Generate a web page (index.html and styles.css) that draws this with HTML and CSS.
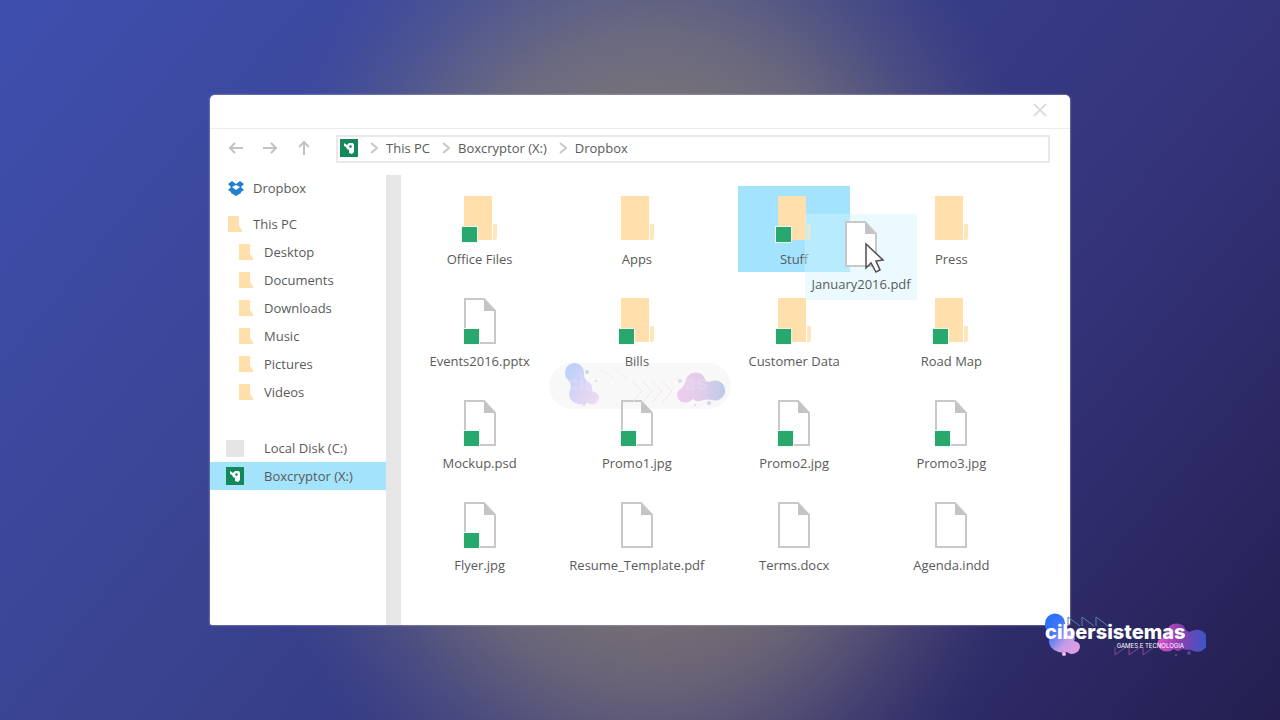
FILE: index.html
```html
<!DOCTYPE html>
<html lang="en">
<head>
<meta charset="utf-8">
<title>Dropbox</title>
<link rel="stylesheet" href="styles.css">
</head>
<body>
<svg class="defs" aria-hidden="true">
  <symbol id="folder" viewBox="0 0 38 47"><path d="M3 0h28v44H3z" fill="#ffdfab"/><path d="M32 29l1-1h3v14l-1 2h-3z" fill="#ffdfab" opacity=".8"/></symbol>
  <symbol id="file" viewBox="0 0 34 47"><path d="M2 1h19l11 12v32H2z" fill="#fff" stroke="#c8c8c8" stroke-width="2"/><path d="M21 1l11 12H21z" fill="#c4c4c4"/></symbol>
  <symbol id="mini" viewBox="0 0 14 16"><path d="M0 0h11v10l3 4v2H0z" fill="#ffdfab"/></symbol>
  <symbol id="box" viewBox="0 0 18 18"><path d="M0 0h18v18H0z" fill="#13895b"/><path d="M4 4l3 2 2-2h4l1 2v7l-2 2-3-1v-3l-2-1-1-2-2-1z" fill="#fff"/><circle cx="10.500" cy="7.500" r="1.300" fill="#13895b"/></symbol>
  <symbol id="next" viewBox="0 0 8 12"><path d="M1 1l6 5-6 5" fill="none" stroke="#c8c8c8" stroke-width="2"/></symbol>
</svg>
<main class="window">
  <header class="titlebar">
    <button class="close" aria-label="Close"><svg width="14" height="14" viewBox="0 0 14 14"><path d="M1 1l12 12M13 1L1 13" stroke="#dcdcdc" stroke-width="2"/></svg></button>
  </header>
  <div class="toolbar">
    <div class="history">
      <button aria-label="Back"><svg width="16" height="16" viewBox="0 0 16 16"><path d="M15 8H2M7 3L2 8l5 5"/></svg></button>
      <button aria-label="Forward"><svg width="16" height="16" viewBox="0 0 16 16"><path d="M1 8h13M9 3l5 5-5 5"/></svg></button>
      <button aria-label="Up"><svg width="16" height="16" viewBox="0 0 16 16"><path d="M8 15V2M3 7l5-5 5 5"/></svg></button>
    </div>
    <nav class="address" aria-label="Path">
      <svg width="18" height="18"><use href="#box"/></svg>
      <svg class="sep" width="8" height="12"><use href="#next"/></svg><a href="#">This PC</a>
      <svg class="sep" width="8" height="12"><use href="#next"/></svg><a href="#">Boxcryptor (X:)</a>
      <svg class="sep" width="8" height="12"><use href="#next"/></svg><a href="#">Dropbox</a>
    </nav>
  </div>
  <div class="body">
    <nav class="sidebar" aria-label="Places">
      <a class="place first" href="#"><svg width="16" height="15" viewBox="0 0 16 15"><path d="M4 0l4 3 4-3 4 3-3 3 3 3-3 2v1l-5 3-5-3v-1L0 9l3-3-3-3z" fill="#2180d0"/><path d="M8 4l4 2-4 3-4-3z" fill="#fff"/></svg><span>Dropbox</span></a>
      <a class="place" href="#"><svg width="14" height="16"><use href="#mini"/></svg><span>This PC</span></a>
      <a class="place child" href="#"><svg width="14" height="16"><use href="#mini"/></svg><span>Desktop</span></a>
      <a class="place child" href="#"><svg width="14" height="16"><use href="#mini"/></svg><span>Documents</span></a>
      <a class="place child" href="#"><svg width="14" height="16"><use href="#mini"/></svg><span>Downloads</span></a>
      <a class="place child" href="#"><svg width="14" height="16"><use href="#mini"/></svg><span>Music</span></a>
      <a class="place child" href="#"><svg width="14" height="16"><use href="#mini"/></svg><span>Pictures</span></a>
      <a class="place child" href="#"><svg width="14" height="16"><use href="#mini"/></svg><span>Videos</span></a>
      <a class="place drive disk" href="#"><svg width="18" height="17" viewBox="0 0 18 17"><path d="M0 0h18v17H0z" fill="#e5e5e5"/></svg><span>Local Disk (C:)</span></a>
      <a class="place drive current" href="#"><svg width="18" height="18"><use href="#box"/></svg><span>Boxcryptor (X:)</span></a>
    </nav>
    <div class="scrollbar"></div>
    <section class="files" aria-label="Files">
      <button class="tile locked"><span class="icon"><svg width="38" height="47"><use href="#folder"/></svg></span><span>Office Files</span></button>
      <button class="tile"><span class="icon"><svg width="38" height="47"><use href="#folder"/></svg></span><span>Apps</span></button>
      <div class="drop">
        <button class="tile locked selected"><span class="icon"><svg width="38" height="47"><use href="#folder"/></svg></span><span>Stuff</span></button>
        <div class="tile dragged"><span class="icon"><svg width="34" height="47"><use href="#file"/></svg></span><span>January2016.pdf</span>
          <svg class="cursor" width="20" height="31" viewBox="0 0 20 31"><path d="M1 2v24l5-5 5 9 4-2-4-9 7-1z" fill="#fff" stroke="#514c52" stroke-width="1.500"/></svg>
        </div>
      </div>
      <button class="tile"><span class="icon"><svg width="38" height="47"><use href="#folder"/></svg></span><span>Press</span></button>
      <button class="tile locked"><span class="icon"><svg width="34" height="47"><use href="#file"/></svg></span><span>Events2016.pptx</span></button>
      <button class="tile locked"><span class="icon"><svg width="38" height="47"><use href="#folder"/></svg></span><span>Bills</span></button>
      <button class="tile locked"><span class="icon"><svg width="38" height="47"><use href="#folder"/></svg></span><span>Customer Data</span></button>
      <button class="tile locked"><span class="icon"><svg width="38" height="47"><use href="#folder"/></svg></span><span>Road Map</span></button>
      <button class="tile locked"><span class="icon"><svg width="34" height="47"><use href="#file"/></svg></span><span>Mockup.psd</span></button>
      <button class="tile locked"><span class="icon"><svg width="34" height="47"><use href="#file"/></svg></span><span>Promo1.jpg</span></button>
      <button class="tile locked"><span class="icon"><svg width="34" height="47"><use href="#file"/></svg></span><span>Promo2.jpg</span></button>
      <button class="tile locked"><span class="icon"><svg width="34" height="47"><use href="#file"/></svg></span><span>Promo3.jpg</span></button>
      <button class="tile locked"><span class="icon"><svg width="34" height="47"><use href="#file"/></svg></span><span>Flyer.jpg</span></button>
      <button class="tile"><span class="icon"><svg width="34" height="47"><use href="#file"/></svg></span><span>Resume_Template.pdf</span></button>
      <button class="tile"><span class="icon"><svg width="34" height="47"><use href="#file"/></svg></span><span>Terms.docx</span></button>
      <button class="tile"><span class="icon"><svg width="34" height="47"><use href="#file"/></svg></span><span>Agenda.indd</span></button>
    </section>
  </div>
</main>
<svg class="watermark" width="182" height="46" viewBox="0 0 182 46" aria-hidden="true">
  <defs>
    <linearGradient id="wl" x1="0" y1="0" x2="1" y2="1"><stop offset="0" stop-color="#b4d0f8"/><stop offset=".5" stop-color="#d7d3f6"/><stop offset="1" stop-color="#f1dcef"/></linearGradient>
    <linearGradient id="wr"><stop offset="0" stop-color="#efcbec"/><stop offset=".5" stop-color="#e0cdea"/><stop offset="1" stop-color="#bccbe8"/></linearGradient>
  </defs>
  <rect width="182" height="46" rx="23" fill="#bbb" opacity=".11"/>
  <g fill="none" stroke="#f4e4ee"><path d="M83 18l10 10-10 12M93 18l10 10-10 12M103 18l10 10-10 12M113 18l10 10-10 12"/><path d="M50 6l14 8-8 6M64 6l14 8-8 6" stroke="#eef4f5"/></g>
  <path d="M16 9a9 9 0 0 1 19 1q-1 6 6 10 3 4 2 8 7 2 7 7a7 7 0 0 1-11 5q-6 3-13 0-8-4-5-13 2-7-2-10-3-3-3-8z" fill="url(#wl)"/>
  <path d="M137 17a10 10 0 0 1 19-1q1 4 7 2a10 10 0 1 1 0 19q-5-1-9 0-6 3-10-1-6 6-13 2-6-6 0-12 4-2 6-9z" fill="url(#wr)"/>
  <g fill="#d5d3ec"><circle cx="38" cy="9" r="2"/><circle cx="47" cy="18" r="1"/><circle cx="160" cy="40" r="2"/><circle cx="146" cy="42" r="1"/><circle cx="35" cy="42" r="1"/><circle cx="131" cy="18" r="2"/></g>
  <text x="18" y="27" class="ghost">cibersistemas</text>
</svg>
<svg class="brand" width="164" height="46" viewBox="0 0 164 46" role="img" aria-label="cibersistemas games e tecnologia">
  <defs>
    <linearGradient id="bl" x1="0" y1="0" x2="1" y2="1"><stop offset="0" stop-color="#1e70ff"/><stop offset=".35" stop-color="#4075f7"/><stop offset=".65" stop-color="#c39be8"/><stop offset="1" stop-color="#ed9de0"/></linearGradient>
    <linearGradient id="br"><stop offset="0" stop-color="#df52ce"/><stop offset=".45" stop-color="#8b3db0"/><stop offset="1" stop-color="#3359c9"/></linearGradient>
  </defs>
  <path d="M3 11a10 10 0 0 1 20-1q0 5 7 9 4 4 2 9 6 1 6 6a8 8 0 0 1-13 5q-6 2-13-2-8-6-4-15-5-4-5-11z" fill="url(#bl)"/>
  <path d="M125 18a10 10 0 0 1 19-1q2 3 6 1a11 11 0 1 1-1 19q-5 0-9-1-4 4-8 0-7 5-14 0-6-8 2-11 4-1 5-7z" fill="url(#br)"/>
  <circle cx="22" cy="41" r="2" fill="#f4b9e7"/><circle cx="147" cy="40" r="2" fill="#554395"/><circle cx="134" cy="42" r="1" fill="#77489c"/>
  <g fill="none" stroke="#5580ac"><path d="M26 13V4l12 9M40 13V4l12 9M54 13V4l12 9"/><path d="M73 42V34M73 42l11-8M87 42V34M87 42l11-8M101 42V34M101 42l11-8" stroke="#8d439e"/></g>
  <text x="3" y="26" class="name">cibersistemas</text>
  <text x="142" y="35" class="tag" text-anchor="end">GAMES E TECNOLOGIA</text>
</svg>
</body>
</html>
```
FILE: styles.css
```css
* { box-sizing: border-box; }
body {
  margin: 0;
  min-height: 100vh;
  position: relative;
  display: flex;
  align-items: center;
  justify-content: center;
  font-family: "Open Sans", "Noto Sans", sans-serif;
  font-size: 13px;
  line-height: 18px;
  color: #5a5a5a;
  background:
    radial-gradient(ellipse 32% 76% at 51% 50%, #948970 0%, #948970cc 35%, #94897088 60%, #94897033 80%, #9489700f 92%, #94897000 100%),
    linear-gradient(130deg, #3f4fae 0%, #39438f 38%, #34337a 70%, #241f50 100%);
}
button { border: 0; padding: 0; background: none; font: inherit; color: inherit; }
a { color: inherit; text-decoration: none; }
svg { display: block; flex: none; }
.defs { position: absolute; width: 0; height: 0; }
.window {
  width: calc(100% - 420px);
  min-width: 720px;
  background: #fff;
  border-radius: 5px 5px 2px 2px;
  box-shadow: 0 0 2px #c4c8ee;
}
.titlebar {
  display: flex;
  justify-content: flex-end;
  align-items: center;
  height: 34px;
  padding: 0 23px 4px;
  border-bottom: 1px solid #ececec;
}
.toolbar { display: flex; align-items: center; padding: 6px 20px 0 18px; }
.history { display: flex; gap: 18px; width: 108px; padding-bottom: 2px; }
.history path { fill: none; stroke: #c2c2c2; stroke-width: 2; }
.address {
  flex: 1;
  display: flex;
  align-items: center;
  height: 28px;
  padding: 0 2px 2px;
  border: 2px solid #e9e9e9;
}
.sep { margin: 0 8px 0 12px; }
.body { display: flex; padding-top: 12px; }
.sidebar { width: 176px; display: flex; flex-direction: column; margin-top: -1px; }
.place { display: flex; align-items: center; height: 28px; padding-left: 18px; }
.place svg { margin-right: 11px; }
.place.first { margin-bottom: 8px; }
.place.first svg { margin-right: 9px; }
.child { padding-left: 29px; }
.drive { padding-left: 16px; }
.drive svg { margin-right: 20px; }
.disk { margin-top: 28px; }
.current { background: #a3e3fb; }
.scrollbar { width: 15px; background: #e6e6e6; }
.files {
  flex: 1;
  display: grid;
  grid-template-columns: repeat(4, 1fr);
  gap: 16px 0;
  justify-items: center;
  padding: 11px 40px 47px 0;
}
.tile {
  display: flex;
  flex-direction: column;
  align-items: center;
  width: 112px;
  height: 86px;
  padding-top: 10px;
  white-space: nowrap;
}
.icon { position: relative; margin-bottom: 7px; }
.locked .icon::after {
  content: "";
  position: absolute;
  left: 0;
  bottom: 0;
  width: 15px;
  height: 15px;
  border: 1px solid #effaf4;
  background: #29a86e;
}
.drop { position: relative; }
.selected { background: #a3e3fd; }
.dragged {
  position: absolute;
  left: 67px;
  top: 28px;
  padding-top: 7px;
  background: #d3f4ff77;
}
.cursor { position: absolute; left: 60px; top: 28px; }
.watermark { position: absolute; left: calc(50% - 91px); top: calc(50% + 3px); pointer-events: none; }
.brand { position: absolute; right: 74px; bottom: 61px; }
.name, .ghost { font-family: Inter, sans-serif; font-weight: 800; font-size: 20px; fill: #fff; }
.ghost { opacity: .15; }
.tag { font-family: Inter, sans-serif; font-size: 6px; fill: #fff; }
```
